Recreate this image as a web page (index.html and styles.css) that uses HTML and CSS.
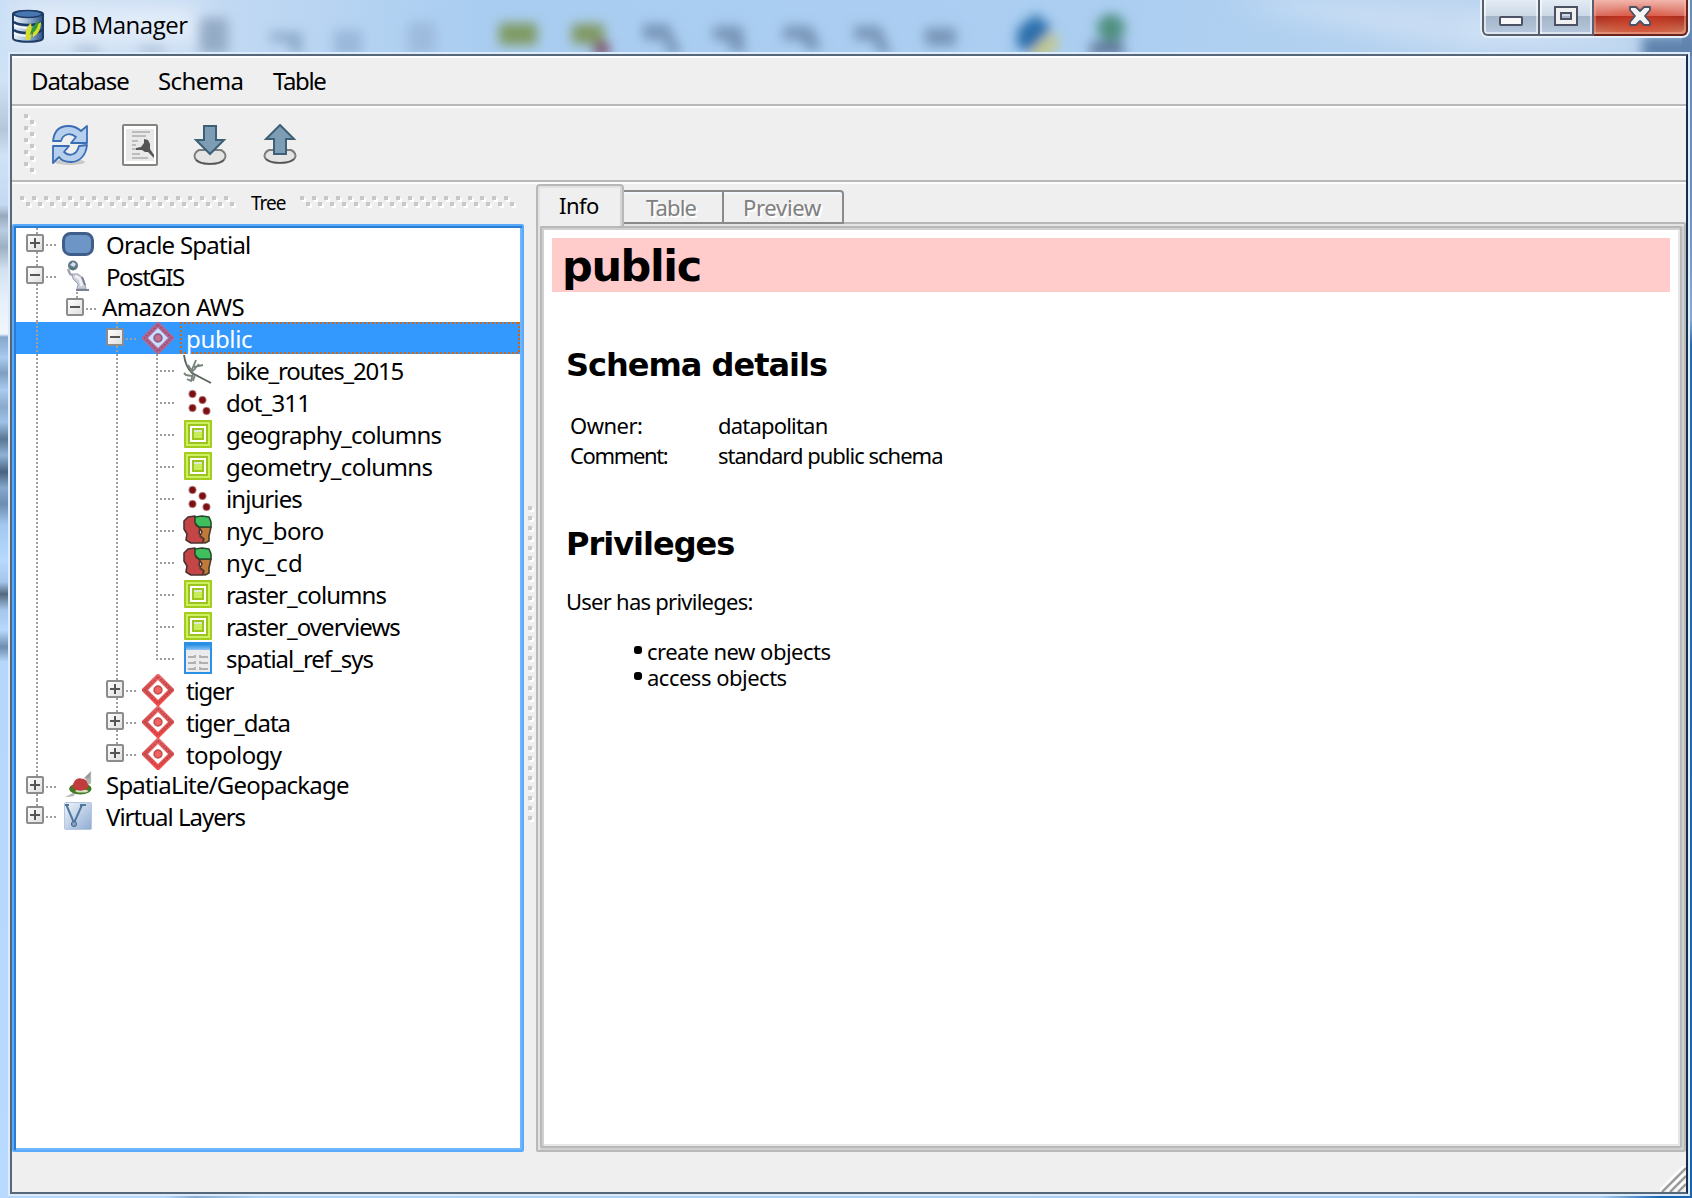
FILE: index.html
```html
<!DOCTYPE html>
<html lang="en">
<head>
<meta charset="utf-8">
<title>DB Manager</title>
<link rel="stylesheet" href="styles.css">
</head>
<body>
<svg class="defs" width="0" height="0" aria-hidden="true">
  <defs>
    <linearGradient id="boxg" x1="0" y1="0" x2="1" y2="1"><stop offset="0" stop-color="#fff"/><stop offset="1" stop-color="#dedede"/></linearGradient>
    <linearGradient id="blueg" x1="0" y1="0" x2="0" y2="1"><stop offset="0" stop-color="#1f8ae0"/><stop offset="1" stop-color="#8cc4f4"/></linearGradient>
    <linearGradient id="vg" x1="0" y1="0" x2="1" y2="1"><stop offset="0" stop-color="#f0f5fb"/><stop offset="1" stop-color="#8fabd2"/></linearGradient>
    <linearGradient id="dbg" x1="0" y1="0" x2="1" y2="0"><stop offset="0" stop-color="#eef4fa"/><stop offset=".45" stop-color="#a9c0da"/><stop offset="1" stop-color="#2c5488"/></linearGradient>
    <linearGradient id="redg" x1="0" y1="0" x2="0" y2="1"><stop offset="0" stop-color="#f06a6a"/><stop offset=".5" stop-color="#d65252"/><stop offset="1" stop-color="#ff4848"/></linearGradient>
    <pattern id="gripV" width="12" height="12" patternUnits="userSpaceOnUse"><path fill="#fff" d="M2 2h4v4H2zM8 8h4v4H8z"/><path fill="#c8c8c8" d="M0 0h4v2H2v2H0zM2 2h2v2H2zM6 6h4v4H6z"/></pattern>
    <pattern id="gripS" width="6" height="10" patternUnits="userSpaceOnUse"><path fill="#fff" d="M2 2h4v4H2z"/><path fill="#cacaca" d="M0 0h4v4H0z"/></pattern>
    <symbol id="plus" viewBox="0 0 18 18"><rect x="1" y="1" width="16" height="16" rx="1" fill="url(#boxg)" stroke="#8c8c8c" stroke-width="2"/><path d="M4 9h10M9 4v10" stroke="#555" stroke-width="2"/></symbol>
    <symbol id="minus" viewBox="0 0 18 18"><rect x="1" y="1" width="16" height="16" rx="1" fill="url(#boxg)" stroke="#8c8c8c" stroke-width="2"/><path d="M4 9h10" stroke="#555" stroke-width="2"/></symbol>
    <symbol id="oracle" viewBox="0 0 32 32"><rect x="1.500" y="5.500" width="29" height="21" rx="7" fill="#6d96c6" stroke="#3f5f8a" stroke-width="3"/></symbol>
    <symbol id="postgis" viewBox="0 0 32 32"><path d="M6 9l2 5 4 2" fill="none" stroke="#9da2b0" stroke-width="2.400"/><path fill="#c9ccd6" stroke="#9da2b0" d="M10 14h6l5 4 2 6 1 5H15l1-5-5-5z"/><path d="M13 16l5 3 2 7" stroke="#eef0f4" stroke-width="3" fill="none"/><path d="M14 30h13M20 17l3 8" stroke="#7b8190" stroke-width="2"/><circle cx="11" cy="5.500" r="5" fill="#63798c"/><path d="M8 5l3-3 3 2-2 3z" fill="#d7e3ea"/><path d="M8 8h4l-1 2z" fill="#3f7a4f"/></symbol>
    <symbol id="schema" viewBox="0 0 32 32"><path fill="url(#redg)" d="M16-1l17 17-17 17L-1 16z"/><path d="M16 2.500L29.500 16 16 29.500 2.500 16z" fill="none" stroke="#b94448" stroke-width="1.600" stroke-dasharray="2 1.500"/><path fill="#fff" d="M16 6L26 16 16 26 6 16z"/><circle cx="16" cy="16" r="3.900" fill="#f06464" stroke="#c44c4c" stroke-width="1.600"/></symbol>
    <symbol id="schema-on" viewBox="0 0 32 32"><path fill="#b5668e" d="M16-1l17 17-17 17L-1 16z"/><path d="M16 2.500L29.500 16 16 29.500 2.500 16z" fill="none" stroke="#8f4f7e" stroke-width="1.600" stroke-dasharray="2 1.500"/><path fill="#c6e0ff" d="M16 6L26 16 16 26 6 16z"/><circle cx="16" cy="16" r="3.900" fill="#c4708f" stroke="#8f5a88" stroke-width="1.600"/></symbol>
    <symbol id="line" viewBox="0 0 32 32"><g fill="none" stroke="#59655c" stroke-width="1.900"><path d="M2 1c1 8 4 14 8 18l19 10"/><path d="M9 18l5-12M12 13l9-2M11 17l6-7M2 19l2 2 6 1M5 25l4 2 2-7M11 27l2-6M6 11l5 8" stroke="#78847b"/></g></symbol>
    <symbol id="point" viewBox="0 0 32 32"><g fill="#7d1010" stroke="#b98c8c" stroke-width=".8"><circle cx="10.500" cy="8" r="3.700"/><circle cx="20.500" cy="14" r="3.700"/><circle cx="10.500" cy="22" r="3.700"/><circle cx="24.500" cy="25" r="3.700"/></g></symbol>
    <symbol id="layer" viewBox="0 0 32 32"><rect x="2" y="2" width="28" height="28" rx="1" fill="#a4cc1c"/><rect x="4" y="4" width="24" height="24" fill="#cdf062"/><rect x="6" y="6" width="20" height="20" fill="#9cc41a"/><rect x="8" y="8" width="16" height="16" fill="#fff"/><rect x="10" y="10" width="12" height="12" fill="#9cc41a"/><rect x="12" y="12" width="8" height="8" fill="#c8ee5c"/><path d="M12 12h8v2h-8z" fill="#e2e8d8"/></symbol>
    <symbol id="poly" viewBox="0 0 32 32"><path fill="#c34545" stroke="#4a3230" stroke-width="1.600" stroke-linejoin="round" d="M6 3l7-1 1 9 4 3-1 5 5 5-1 5-12 0-5-3 1-6-3-5 0-8z"/><path fill="#c07a3c" stroke="#4a3a28" stroke-width="1.600" stroke-linejoin="round" d="M17 13h12l-2 9v5l-4 2-2-1 1-3-4-3 2-4z"/><path fill="#3fc05c" stroke="#28482c" stroke-width="1.600" stroke-linejoin="round" d="M13 3l7-1 7 1 2 5 0 5-12 0-4-4z"/></symbol>
    <symbol id="table" viewBox="0 0 32 32"><rect x="3" y="1" width="26" height="30" fill="#ececec" stroke="#2a92e6" stroke-width="2"/><path d="M4 2h24v6H4z" fill="url(#blueg)"/><path d="M6 15h7v-2M18 13v2h8M6 21h7v-2M18 19v2h8M6 27h7v-2M18 25v2h8" fill="none" stroke="#b0b0b0" stroke-width="1.800"/></symbol>
    <symbol id="spatialite" viewBox="0 0 32 32"><path d="M2 29l9-1 19-26v12z" fill="#b4b4b4"/><path d="M22 9l8-8-2 8z" fill="#9a9a9a"/><ellipse cx="18.500" cy="20" rx="12" ry="6" fill="#417a22"/><ellipse cx="20" cy="22.500" rx="7" ry="1.600" fill="#d5e6c6"/><path d="M10 19c1-7 4-11 9-10 6 0 8 5 8 10-5 4-12 4-17 0z" fill="#c13c3c"/></symbol>
    <symbol id="virtual" viewBox="0 0 32 32"><rect x="2.500" y="2.500" width="27" height="27" rx="1" fill="url(#vg)" stroke="#b5c8e0"/><path d="M4 4l8 19 8-18h4" fill="none" stroke="#50789f" stroke-width="2"/><circle cx="12" cy="24" r="2.600" fill="#7f9dc0" stroke="#44688f"/><path d="M3 5h4M19 4v4" stroke="#50789f" stroke-width="2"/></symbol>
  </defs>
</svg>

<div class="window">
  <svg class="aero" width="1692" height="56" aria-hidden="true">
    <defs><filter id="soft" x="-50%" y="-50%" width="200%" height="200%"><feGaussianBlur stdDeviation="6"/></filter><filter id="wide" x="-20%" y="-80%" width="140%" height="260%"><feGaussianBlur stdDeviation="12"/></filter></defs>
    <g filter="url(#wide)"><rect x="20" y="8" width="180" height="34" fill="#e6effa"/><path d="M1230 0h200l260 50h-220z" fill="#cfe1f5"/><path d="M1300 0h170v34z" fill="#c5daf2"/></g>
    <g filter="url(#soft)">
      <rect x="200" y="18" width="28" height="36" fill="#94abc6"/><rect x="75" y="46" width="24" height="12" fill="#b3c6dc"/><rect x="140" y="46" width="24" height="12" fill="#b3c6dc"/>
      <path d="M270 32h32v22h-10l-4-12h-18z" fill="#8eabcc"/><rect x="334" y="30" width="28" height="26" fill="#9ab8da"/><rect x="408" y="22" width="28" height="32" fill="#9dbbdd"/>
      <rect x="499" y="23" width="38" height="22" fill="#7f9a62"/><rect x="572" y="24" width="32" height="20" fill="#809860"/><rect x="594" y="42" width="15" height="14" fill="#7c4668"/>
      <g fill="#7895b7"><path d="M642 24h26l14 30h-14l-4-14h-20z"/><path d="M714 26h28l4 26h-14l-6-12h-14z"/><path d="M784 26h28l10 24h-14l-8-10h-18z"/><path d="M854 26h26l12 28h-12l-8-14h-18z"/><path d="M924 28h32v18h-30z"/></g>
      <path d="M1018 28l18-14 16 14-22 24-14-6z" fill="#2c70ac"/><path d="M1032 50l22-18 6 12-14 14-14 4z" fill="#c3c88a"/><circle cx="1111" cy="28" r="14" fill="#4f9080"/><rect x="1090" y="42" width="34" height="14" fill="#627a9c"/>
    </g>
    <rect x="1642" y="36" width="60" height="26" fill="#5f83ad" filter="url(#soft)"/>
  </svg>

  <header class="titlebar">
    <svg class="app-icon" viewBox="0 0 32 34"><path d="M1 5C1 1 31 1 31 5v24c0 5-30 5-30 0z" fill="url(#dbg)" stroke="#1f3c66" stroke-width="2"/><ellipse cx="16" cy="5" rx="14" ry="3.500" fill="#4777b0" stroke="#1f3c66" stroke-width="1.500"/><path d="M2 13c5 4 23 4 28 0M2 21c5 4 23 4 28 0" fill="none" stroke="#1c3a64" stroke-width="2.400"/><path d="M2 16c5 3 10 3 15 3M2 24c5 3 10 3 15 3" fill="none" stroke="#f4f8fc" stroke-width="2"/><path d="M14 31c-1-8 0-13 5-17 1 6 1 12-1 17zM21 28c-1-7 2-12 8-15 0 6-2 12-8 15z" fill="#d7dd2c"/><path d="M18 26c1-6 4-11 9-14-1 6-3 9-5 11" fill="#2f9a34"/></svg>
    <h1 class="app-title">DB Manager</h1>
    <div class="win-buttons">
      <span class="wb min"><svg width="24" height="22" viewBox="0 0 24 22"><rect x="1" y="11" width="22" height="8" rx="1" fill="#f8f8f8" stroke="#4c5264" stroke-width="2"/></svg></span>
      <span class="wb max"><svg width="24" height="22" viewBox="0 0 24 22"><path fill="#f0f0f0" fill-rule="evenodd" stroke="#4c5264" stroke-width="2" d="M1 1h22v18H1zM7 7v6h10V7z"/></svg></span>
      <span class="wb close"><svg width="24" height="22" viewBox="0 0 24 22"><path fill="#f4f4f4" stroke="#4c5264" stroke-width="1.800" stroke-linejoin="round" d="M2 1h6l4 4 4-4h6v3l-5 6 5 6v3h-6l-4-4-4 4H2v-3l5-6-5-6z"/></svg></span>
    </div>
  </header>

  <div class="client">
    <nav class="menubar"><span class="m-database">Database</span><span class="m-schema">Schema</span><span class="m-table">Table</span></nav>

    <div class="toolbar">
      <svg class="grip" width="12" height="60"><rect width="12" height="60" fill="url(#gripV)"/></svg>
      <svg class="tool" viewBox="0 0 38 42"><ellipse cx="19" cy="38" rx="15" ry="3" fill="#c9c9c9"/><g fill="#b5cfec" stroke="#3a6db5" stroke-width="1.800" stroke-linejoin="round"><path d="M2 17C3 8 8 2 17 2c6 0 10 2 13 5l6-5v17H20l5-6c-6-5-13-3-15 4z"/><path d="M36 21c-1 10-7 17-16 17-6 0-10-2-12-5l-6 6V22h16l-5 6c5 5 13 3 15-6z"/></g></svg>
      <svg class="tool" viewBox="0 0 38 42"><rect x="2" y="1" width="34" height="40" rx="1" fill="#fff" stroke="#85857f" stroke-width="2"/><rect x="5" y="5" width="28" height="32" fill="#e9e9e9"/><path d="M11 8h18M11 12h14M11 30h8M11 34h16M11 17h6M11 21h4M11 25h6" stroke="#bcbcbc" stroke-width="1.800"/><path d="M23 15l4 1 2 4 0 5 4 6 0 3-6-6-3 0-3-2-6 0 0-2 5-1 3-4z" fill="#555"/></svg>
      <svg class="tool" viewBox="0 0 38 42"><path d="M8 26C0 30 2 40 19 40s19-10 11-14z" fill="#e4e4e4" stroke="#7d7d7d" stroke-width="2"/><path d="M5 36c6 5 22 5 28 0" fill="none" stroke="#555" stroke-width="1.600"/><path d="M13 2h12v14h8L19 30 5 16h8z" fill="#7c9db3" stroke="#3e5f75" stroke-width="2"/></svg>
      <svg class="tool" viewBox="0 0 38 42"><path d="M8 26C0 30 2 39 19 39s19-9 11-13z" fill="#e4e4e4" stroke="#7d7d7d" stroke-width="2"/><path d="M5 35c6 5 22 5 28 0" fill="none" stroke="#555" stroke-width="1.600"/><path d="M19 1l14 14h-8v15H13V15H5z" fill="#7c9db3" stroke="#3e5f75" stroke-width="2"/></svg>
    </div>

    <div class="workspace">
      <section class="dock">
        <div class="dock-title"><svg width="218" height="12"><rect width="216" height="12" fill="url(#gripV)"/></svg><span>Tree</span><svg width="216" height="12"><rect width="216" height="12" fill="url(#gripV)"/></svg></div>
        <div class="tree">
          <div class="row"><i class="cell v h"><svg class="ex"><use href="#plus"/></svg></i><svg class="ic"><use href="#oracle"/></svg><span class="s7">Oracle Spatial</span></div>
          <div class="row"><i class="cell v h"><svg class="ex"><use href="#minus"/></svg></i><svg class="ic"><use href="#postgis"/></svg><span class="s14">PostGIS</span></div>
          <div class="row short"><i class="cell v"></i><i class="cell up h"><svg class="ex"><use href="#minus"/></svg></i><span class="s6 bare">Amazon AWS</span></div>
          <div class="row selected"><i class="cell v"></i><i class="cell"></i><i class="cell v h"><svg class="ex"><use href="#minus"/></svg></i><svg class="ic"><use href="#schema-on"/></svg><span class="s3">public</span></div>
          <div class="row"><i class="cell v"></i><i class="cell"></i><i class="cell v"></i><i class="cell v h leaf"></i><svg class="ic"><use href="#line"/></svg><span class="s11">bike_routes_2015</span></div>
          <div class="row"><i class="cell v"></i><i class="cell"></i><i class="cell v"></i><i class="cell v h leaf"></i><svg class="ic"><use href="#point"/></svg><span class="s8">dot_311</span></div>
          <div class="row"><i class="cell v"></i><i class="cell"></i><i class="cell v"></i><i class="cell v h leaf"></i><svg class="ic"><use href="#layer"/></svg><span class="s8">geography_columns</span></div>
          <div class="row"><i class="cell v"></i><i class="cell"></i><i class="cell v"></i><i class="cell v h leaf"></i><svg class="ic"><use href="#layer"/></svg><span class="s6">geometry_columns</span></div>
          <div class="row"><i class="cell v"></i><i class="cell"></i><i class="cell v"></i><i class="cell v h leaf"></i><svg class="ic"><use href="#point"/></svg><span class="s9">injuries</span></div>
          <div class="row"><i class="cell v"></i><i class="cell"></i><i class="cell v"></i><i class="cell v h leaf"></i><svg class="ic"><use href="#poly"/></svg><span class="s6">nyc_boro</span></div>
          <div class="row"><i class="cell v"></i><i class="cell"></i><i class="cell v"></i><i class="cell v h leaf"></i><svg class="ic"><use href="#poly"/></svg><span class="s0">nyc_cd</span></div>
          <div class="row"><i class="cell v"></i><i class="cell"></i><i class="cell v"></i><i class="cell v h leaf"></i><svg class="ic"><use href="#layer"/></svg><span class="s9">raster_columns</span></div>
          <div class="row"><i class="cell v"></i><i class="cell"></i><i class="cell v"></i><i class="cell v h leaf"></i><svg class="ic"><use href="#layer"/></svg><span class="s9">raster_overviews</span></div>
          <div class="row"><i class="cell v"></i><i class="cell"></i><i class="cell v"></i><i class="cell up h leaf"></i><svg class="ic"><use href="#table"/></svg><span class="s10">spatial_ref_sys</span></div>
          <div class="row"><i class="cell v"></i><i class="cell"></i><i class="cell v h"><svg class="ex"><use href="#plus"/></svg></i><svg class="ic"><use href="#schema"/></svg><span class="s11">tiger</span></div>
          <div class="row"><i class="cell v"></i><i class="cell"></i><i class="cell v h"><svg class="ex"><use href="#plus"/></svg></i><svg class="ic"><use href="#schema"/></svg><span class="s10">tiger_data</span></div>
          <div class="row"><i class="cell v"></i><i class="cell"></i><i class="cell up h"><svg class="ex"><use href="#plus"/></svg></i><svg class="ic"><use href="#schema"/></svg><span class="s6">topology</span></div>
          <div class="row short"><i class="cell v h"><svg class="ex"><use href="#plus"/></svg></i><svg class="ic"><use href="#spatialite"/></svg><span class="s8">SpatiaLite/Geopackage</span></div>
          <div class="row"><i class="cell up h"><svg class="ex"><use href="#plus"/></svg></i><svg class="ic"><use href="#virtual"/></svg><span class="s10">Virtual Layers</span></div>
        </div>
      </section>

      <div class="splitter"><svg width="6" height="320"><rect width="6" height="320" fill="url(#gripS)"/></svg></div>

      <section class="tabs">
        <div class="tabbar"><span class="tab active">Info</span><span class="tab t-table">Table</span><span class="tab last">Preview</span></div>
        <div class="pane"><div class="view">
          <h1 class="name">public</h1>
          <h2>Schema details</h2>
          <dl><dt class="s5">Owner:</dt><dd class="s8">datapolitan</dd><dt class="s13">Comment:</dt><dd class="s10">standard public schema</dd></dl>
          <h2>Privileges</h2>
          <p class="s7">User has privileges:</p>
          <ul><li class="s4">create new objects</li><li class="s4">access objects</li></ul>
        </div></div>
      </section>
    </div>

    <footer class="statusbar"><svg width="26" height="26" viewBox="0 0 26 26"><g stroke-width="2.400"><path d="M0 26L26 0M8 26L26 8M16 26L26 16" stroke="#fff" transform="translate(-1 -1)"/><path d="M2 26L26 2M10 26L26 10M18 26L26 18" stroke="#999"/></g></svg></footer>
  </div>
</div>
</body>
</html>
```
FILE: styles.css
```css
* { box-sizing: border-box; }
html, body { margin: 0; height: 100%; }
body { font-family: "Noto Sans", sans-serif; font-size: 24px; color: #000; background: #1b64b2; overflow: hidden; }
h1, h2, p, ul, dl, dd { margin: 0; padding: 0; font-weight: normal; }
svg { display: block; flex: none; }
.defs { position: absolute; }

.window {
  position: relative; width: 1692px; height: 1198px; padding: 0 2px 2px 8px;
  display: flex; flex-direction: column;
  background:
    linear-gradient(#c9dff6 0, #cfe2f6 80px, #b4c6da 130px, #cfe2f6 155px, #c4d9f2 205px, #96a8bb 216px, #b9cde2 230px, #9cafc1 247px, #d3e1f0 270px, #e6f0fb 300px, #f0f6fd 334px, #86a6cb 337px, #a9cbef 358px, #7f9ec0 373px, #a9cbef 390px, #8aa9cc 407px, #9fc2e8 422px, #5a7692 439px, #8fb2d8 455px, #48627e 472px, #86a8ce 488px, #6c8cb0 504px, #a4c8f0 525px, #b6d9fd 560px, #a4c6ea 582px, #52697f 594px, #a4c6ea 610px, #b6d9fd 630px, #6e8cae 647px, #b4d7fb 662px, #b8dafe 100%) 0 0 / 8px 100% no-repeat,
    linear-gradient(#6a8cb4 0, #6c90ba 200px, #86a8d0 320px, #2a68ae 345px, #1b64b2 100%) 100% 0 / 10px 100% no-repeat,
    linear-gradient(90deg, #b4d7fb 0, #b4d7fb 165px, #8aaed2 195px, #b0d2f4 260px, #a9cdf2 1600px, #1b64b2 1660px) 0 100% / 100% 2px no-repeat,
    linear-gradient(90deg, #cfe0f3 0, #c8dcf3 160px, #a9cdf1 480px, #abcef1 1100px, #b5d2f0 1400px, #b5cfea 1692px);
}
.aero { position: absolute; left: 0; top: 0; }

.titlebar { position: relative; flex: none; height: 52px; display: flex; align-items: flex-start; }
.app-icon { width: 32px; height: 34px; margin: 9px 0 0 4px; }
.app-title { margin-left: 10px; font: 24px/50px "Open Sans", sans-serif; letter-spacing: -.5px; }
.win-buttons { margin-left: auto; display: flex; width: 210px; height: 38px; border: 2px solid #e6f0fa; border-top: 0; border-radius: 0 0 8px 8px; }
.wb { height: 36px; display: flex; justify-content: center; padding-top: 6px; border: 2px solid #56606e; border-top: 0; border-left-width: 0; box-shadow: inset 2px 0 0 #ffffff99, inset -2px -2px 0 #ffffff88; background: linear-gradient(#e3ebf4 0, #ccd8e6 16px, #a3b4c7 16px, #b8c9e0 34px); }
.min { width: 58px; border-left-width: 2px; border-bottom-left-radius: 6px; }
.max { width: 54px; }
.close { width: 94px; border-color: #6b241c; border-bottom-right-radius: 6px; box-shadow: inset 2px 0 0 #ffb0a066, inset -2px -2px 0 #ffc0b066; background: radial-gradient(ellipse 44px 20px at 50% 70%, #e0402299, transparent), linear-gradient(#f2b5ac 0, #d8695a 16px, #a92a1c 16px, #cf7a5c 34px); }

.client { position: relative; flex: 1; min-height: 0; display: flex; flex-direction: column; background: #efefef; border: 2px solid #56677a; border-right-color: #142f4e; box-shadow: 0 0 0 2px #dcebfa; margin: 2px; }
.menubar { flex: none; height: 50px; border-top: 2px solid #fff; border-bottom: 2px solid #b8b8b8; padding-left: 19px; display: flex; line-height: 46px; }
.m-database { width: 127px; letter-spacing: -1.1px; }
.m-schema { width: 115px; letter-spacing: -.6px; }
.m-table { letter-spacing: -1.4px; }
.toolbar { flex: none; height: 76px; border-top: 2px solid #fcfcfc; border-bottom: 2px solid #b8b8b8; display: flex; padding: 6px 0 0 12px; }
.tool { width: 38px; height: 42px; margin: 10px 0 0 32px; }
.grip + .tool { margin-left: 15px; }

.workspace { flex: 1; min-height: 0; display: flex; border-top: 2px solid #fcfcfc; }
.dock { width: 512px; display: flex; flex-direction: column; }
.dock-title { flex: none; height: 40px; display: flex; padding-left: 8px; font-size: 19px; line-height: 38px; letter-spacing: -1px; }
.dock-title svg { margin-top: 12px; }
.dock-title span { width: 62px; padding-left: 13px; }
.tree { flex: 1; border: 2px solid #5aa9fb; border-radius: 2px; background: #fff; box-shadow: inset 2px 2px 0 #2a7bd2, inset -2px -2px 0 #70b5ff; padding: 2px; }
.row { height: 32px; display: flex; line-height: 34px; white-space: nowrap; }
.short { height: 30px; line-height: 30px; }
.cell { flex: none; width: 40px; height: 100%; padding: 6px 0 0 10px; background-repeat: no-repeat; --v: repeating-linear-gradient(#a0a0a0 0 2px, transparent 2px 4px); --h: repeating-linear-gradient(90deg, #a0a0a0 0 2px, transparent 2px 4px); }
.v { background-image: var(--v); background-size: 2px 100%; background-position: 20px 0; }
.v.h { background-image: var(--v), var(--h); background-size: 2px 100%, 10px 2px; background-position: 20px 0, 30px 16px; }
.up.h { background-image: var(--v), var(--h); background-size: 2px 18px, 10px 2px; background-position: 20px 0, 30px 16px; }
.v.leaf { background-size: 2px 100%, 14px 2px; background-position: 20px 0, 24px 16px; }
.up.leaf { background-size: 2px 18px, 14px 2px; background-position: 20px 0, 24px 16px; }
.ex { width: 18px; height: 18px; }
.ic { width: 32px; height: 32px; margin-left: 6px; overflow: visible; }
.short .ic { height: 30px; }
.row > span { margin-left: 6px; padding-left: 6px; }
.row > .bare { margin-left: 0; }
.selected { background: #3399ff; color: #fff; }
.selected > span { flex: 1; background:
  repeating-linear-gradient(90deg, #c8681e 0 2px, transparent 2px 4px) 0 0 / 100% 2px no-repeat,
  repeating-linear-gradient(90deg, #c8681e 0 2px, transparent 2px 4px) 0 100% / 100% 2px no-repeat,
  repeating-linear-gradient(#c8681e 0 2px, transparent 2px 4px) 0 0 / 2px 100% no-repeat,
  repeating-linear-gradient(#c8681e 0 2px, transparent 2px 4px) 100% 0 / 2px 100% no-repeat; }

.splitter { width: 12px; padding: 322px 0 0 4px; }

.tabs { flex: 1; display: flex; flex-direction: column; font-size: 22px; }
.tabbar { position: relative; z-index: 1; flex: none; height: 38px; display: flex; align-items: flex-start; }
.tab { height: 34px; margin-top: 6px; line-height: 31px; border: 2px solid #8a8a8a; border-left: 0; color: #808080; text-shadow: 2px 2px 0 #fff; box-shadow: inset 0 2px 0 #f4f8ff; }
.active { width: 88px; height: 42px; margin-top: 0; padding-left: 21px; line-height: 39px; border: 2px solid #b8b8b8; border-bottom: 0; border-radius: 4px 4px 0 0; background: #efefef; color: #000; text-shadow: none; letter-spacing: -.5px; box-shadow: inset 2px 2px 0 #e2e2e2, inset -2px 0 0 #d4d4d4; }
.t-table { width: 100px; padding-left: 22px; letter-spacing: -.9px; }
.last { width: 120px; padding-left: 19px; letter-spacing: -.3px; border-top-right-radius: 4px; }
.pane { flex: 1; display: flex; padding: 2px; border: 2px solid #b8b8b8; border-radius: 0 2px 2px 2px; background: #d0d0d0; box-shadow: inset 2px 2px 0 #e3e3e3; }
.view { flex: 1; border: 2px solid #b8b8b8; border-radius: 2px; background: #fff; box-shadow: inset 2px 2px 0 #d0d0d0, inset -2px -2px 0 #e6e6e6; padding: 10px 10px 0 10px; }
.name { height: 54px; padding-left: 10px; background: #ffcbcb; font: bold 43px/57px "DejaVu Sans", sans-serif; letter-spacing: -1.4px; margin-bottom: 53px; }
h2 { padding-left: 14px; font: bold 32px/40px "DejaVu Sans", sans-serif; letter-spacing: -1px; }
dl { display: grid; grid-template-columns: 148px 1fr; line-height: 30px; padding-left: 18px; margin: 25px 0 54px; }
.view p { padding-left: 14px; margin: 22px 0; line-height: 30px; }
ul { list-style: none; line-height: 26px; padding-left: 82px; }
li { display: flex; }
li::before { content: ""; width: 8px; height: 8px; border-radius: 3px; background: #000; margin: 8px 5px 0 0; }

.statusbar { flex: none; height: 40px; display: flex; justify-content: flex-end; align-items: flex-end; }

.s0 { letter-spacing: .25px; }
.s3 { letter-spacing: -.35px; }
.s4 { letter-spacing: -.5px; }
.s5 { letter-spacing: -.5px; }
.s6 { letter-spacing: -.6px; }
.s7 { letter-spacing: -.75px; }
.s8 { letter-spacing: -.8px; }
.s9 { letter-spacing: -.92px; }
.s10 { letter-spacing: -1px; }
.s11 { letter-spacing: -1.18px; }
.s13 { letter-spacing: -1.35px; }
.s14 { letter-spacing: -1.47px; }
```
